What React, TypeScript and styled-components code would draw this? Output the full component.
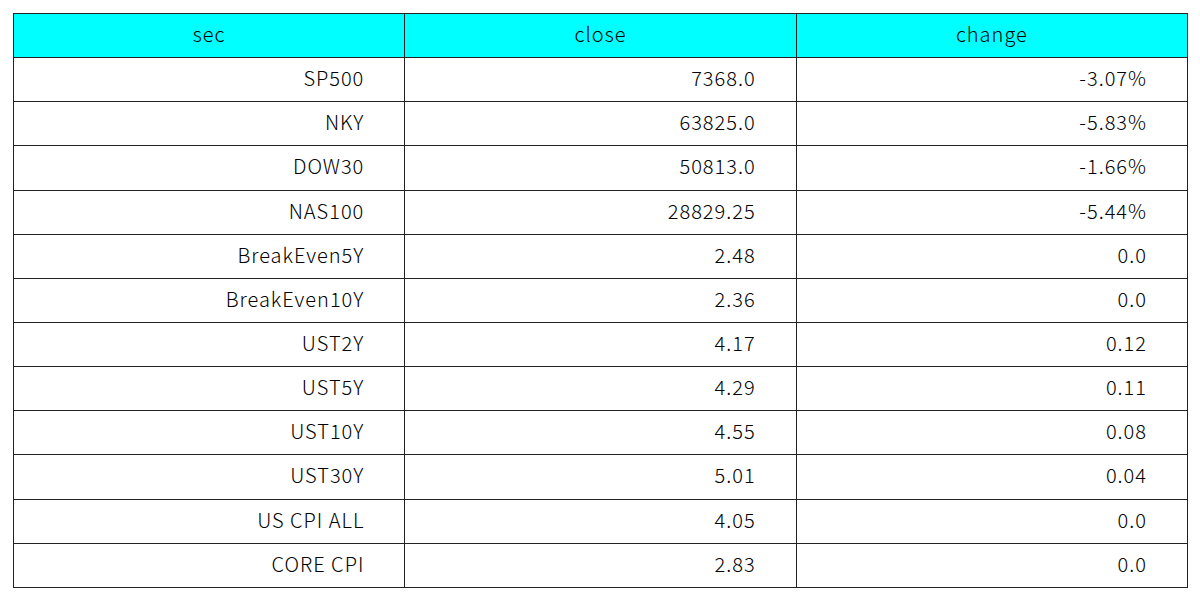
import React from 'react';
import styled, { createGlobalStyle } from 'styled-components';

const GlobalStyle = createGlobalStyle`
  html, body {
    margin: 0;
    padding: 0;
    background: #ffffff;
  }
`;

const Page = styled.div`
  padding: 13px 0 0 13px;
`;

const Table = styled.table`
  width: 1175px;
  border-collapse: collapse;
  table-layout: fixed;
  font-family: "Noto Sans CJK JP", "Noto Sans", sans-serif;
  font-size: 20px;
  font-weight: 300;
  letter-spacing: 1px;
  line-height: 1.2;
  color: #000;
`;

const HeadCell = styled.th`
  height: 40.15px;
  padding: 0 0 3px;
  background: #00ffff;
  border: 1px solid #222;
  font-weight: 300;
  text-align: center;
`;

const Cell = styled.td`
  height: 40.15px;
  padding: 0 40px 3px 0;
  border: 1px solid #222;
  text-align: right;
`;

const columns = ['sec', 'close', 'change'];

const rows: [string, string, string][] = [
  ['SP500', '7368.0', '-3.07%'],
  ['NKY', '63825.0', '-5.83%'],
  ['DOW30', '50813.0', '-1.66%'],
  ['NAS100', '28829.25', '-5.44%'],
  ['BreakEven5Y', '2.48', '0.0'],
  ['BreakEven10Y', '2.36', '0.0'],
  ['UST2Y', '4.17', '0.12'],
  ['UST5Y', '4.29', '0.11'],
  ['UST10Y', '4.55', '0.08'],
  ['UST30Y', '5.01', '0.04'],
  ['US CPI ALL', '4.05', '0.0'],
  ['CORE CPI', '2.83', '0.0'],
];

const App: React.FC = () => {
  return (
    <Page>
      <GlobalStyle />
      <Table>
        <thead>
          <tr>
            {columns.map((col) => (
              <HeadCell key={col}>{col}</HeadCell>
            ))}
          </tr>
        </thead>
        <tbody>
          {rows.map((row) => (
            <tr key={row[0]}>
              {row.map((value, index) => (
                <Cell key={index}>{value}</Cell>
              ))}
            </tr>
          ))}
        </tbody>
      </Table>
    </Page>
  );
};

export default App;
